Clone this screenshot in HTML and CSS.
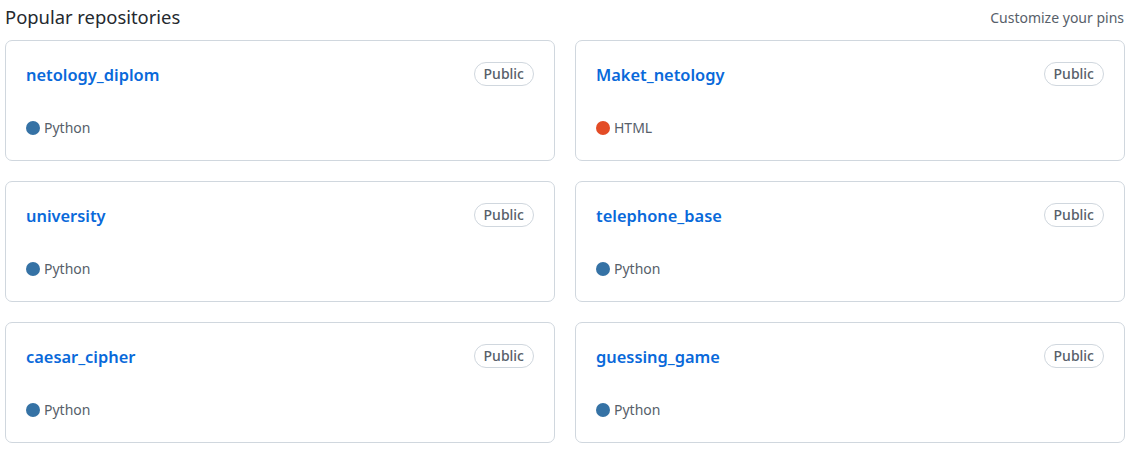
FILE: index.html
```html
<!DOCTYPE html>
<html lang="en">
<head>
<meta charset="utf-8">
<title>Popular repositories</title>
<link rel="stylesheet" href="styles.css">
</head>
<body>
<div class="page">
  <div class="head">
    <h2 class="title">Popular repositories</h2>
    <a class="customize" href="#">Customize your pins</a>
  </div>
  <ol class="grid">
    <li class="card">
      <div class="top"><a class="name" href="#">netology_diplom</a><span class="badge">Public</span></div>
      <p class="lang"><span class="dot py"></span>Python</p>
    </li>
    <li class="card">
      <div class="top"><a class="name" href="#">Maket_netology</a><span class="badge">Public</span></div>
      <p class="lang"><span class="dot html"></span>HTML</p>
    </li>
    <li class="card">
      <div class="top"><a class="name" href="#">university</a><span class="badge">Public</span></div>
      <p class="lang"><span class="dot py"></span>Python</p>
    </li>
    <li class="card">
      <div class="top"><a class="name" href="#">telephone_base</a><span class="badge">Public</span></div>
      <p class="lang"><span class="dot py"></span>Python</p>
    </li>
    <li class="card">
      <div class="top"><a class="name" href="#">caesar_cipher</a><span class="badge">Public</span></div>
      <p class="lang"><span class="dot py"></span>Python</p>
    </li>
    <li class="card">
      <div class="top"><a class="name" href="#">guessing_game</a><span class="badge">Public</span></div>
      <p class="lang"><span class="dot py"></span>Python</p>
    </li>
  </ol>
</div>
</body>
</html>
```
FILE: styles.css
```css
* { box-sizing: border-box; }
html, body { margin: 0; padding: 0; background: #ffffff; }
body {
  font-family: "Noto Sans", "Liberation Sans", sans-serif;
  color: #24292f;
}
.page {
  width: 1120px;
  margin-left: 5px;
}
.head {
  display: flex;
  justify-content: space-between;
  align-items: center;
  height: 34px;
  margin-bottom: 6px;
}
.title {
  margin: 0;
  font-size: 18.4px;
  font-weight: 400;
  color: #24292f;
  line-height: 34px;
}
.customize {
  font-size: 14px;
  color: #57606a;
  text-decoration: none;
  margin-right: 1px;
}
.grid {
  list-style: none;
  margin: 0;
  padding: 0;
  display: grid;
  grid-template-columns: 550px 550px;
  column-gap: 20px;
  row-gap: 20px;
}
.card {
  height: 121px;
  border: 1px solid #d0d7de;
  border-radius: 7px;
  padding: 20px 20px 22px;
  display: flex;
  flex-direction: column;
  justify-content: space-between;
}
.top {
  display: flex;
  justify-content: space-between;
  align-items: center;
  height: 26px;
}
.name {
  color: #0969da;
  font-weight: 600;
  font-size: 16.4px;
  text-decoration: none;
}
.badge {
  font-size: 14px;
  font-weight: 500;
  color: #57606a;
  border: 1px solid #d0d7de;
  border-radius: 2em;
  padding: 0 9px;
  line-height: 22px;
}
.lang {
  margin: 0;
  display: flex;
  align-items: center;
  font-size: 14px;
  line-height: 20px;
  color: #57606a;
}
.dot {
  width: 14px;
  height: 14px;
  border-radius: 50%;
  margin-right: 4px;
  display: inline-block;
}
.py { background: #3572a5; }
.html { background: #e34c26; }
```
